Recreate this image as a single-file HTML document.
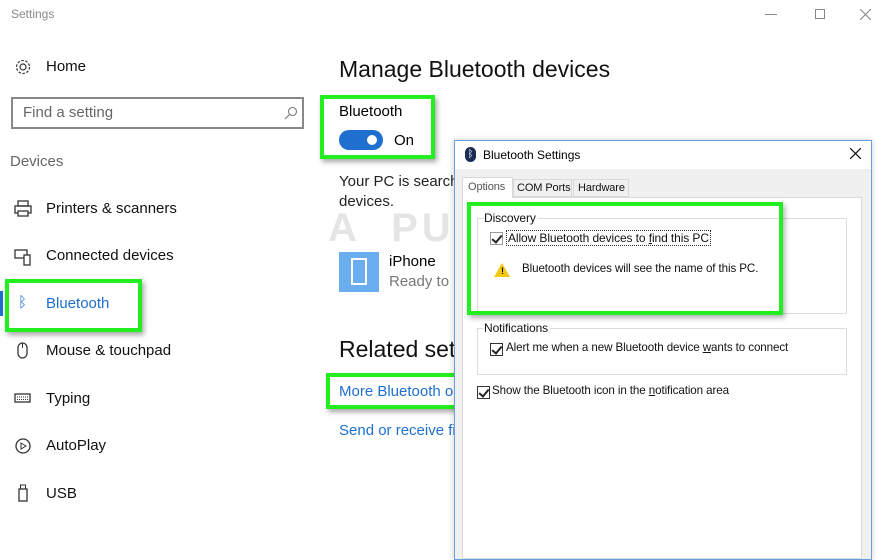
<!DOCTYPE html>
<html><head><meta charset="utf-8"><style>
*{margin:0;padding:0;box-sizing:border-box}
body{width:883px;height:559px;overflow:hidden;background:#fff;font-family:"Liberation Sans",sans-serif;color:#000;position:relative}
.a{position:absolute;white-space:nowrap}
.nav{font-size:15px;color:#111}
.ic{position:absolute;left:14px;width:18px;height:18px}
.g{position:absolute;border:4px solid #22ee22;box-shadow:2px 3px 5px rgba(0,0,0,.35)}
.d{font-size:12px;color:#111;letter-spacing:-0.1px}
.cb{position:absolute;width:13px;height:13px;border:1px solid #333;background:#fff}
.cb:after{content:"";position:absolute;left:3px;top:0px;width:4px;height:8px;border:solid #222;border-width:0 2px 2px 0;transform:rotate(40deg)}
</style></head><body>
<div class="a" style="left:11px;top:7px;font-size:12px;color:#888">Settings</div>
<div class="a" style="left:765px;top:14px;width:12px;height:1px;background:#888"></div>
<div class="a" style="left:815px;top:9px;width:10px;height:10px;border:1px solid #888"></div>
<svg class="a" style="left:860px;top:9px" width="11" height="11" viewBox="0 0 11 11"><path d="M0 0L11 11M11 0L0 11" stroke="#888" stroke-width="1.1"/></svg>

<svg class="ic" style="top:58px" viewBox="0 0 18 18"><circle cx="9" cy="9" r="3" fill="none" stroke="#333" stroke-width="1.2"/><circle cx="9" cy="9" r="6.5" fill="none" stroke="#333" stroke-width="1.2" stroke-dasharray="2.5 1.6"/></svg>
<div class="a nav" style="left:46px;top:58px">Home</div>
<div class="a" style="left:11px;top:97px;width:293px;height:32px;border:2px solid #888"></div>
<div class="a" style="left:23px;top:104px;font-size:15px;color:#666">Find a setting</div>
<svg class="a" style="left:284px;top:106px" width="14" height="14" viewBox="0 0 14 14"><circle cx="8.5" cy="5.5" r="4" fill="none" stroke="#777" stroke-width="1.1"/><path d="M5.5 8.5L1 13" stroke="#777" stroke-width="1.2"/></svg>
<div class="a" style="left:10px;top:153px;font-size:15px;color:#666">Devices</div>

<svg class="ic" style="top:200px" viewBox="0 0 18 18"><rect x="4" y="1" width="10" height="5" fill="none" stroke="#333" stroke-width="1.3"/><rect x="1" y="6" width="16" height="7" fill="none" stroke="#333" stroke-width="1.3"/><rect x="4" y="11" width="10" height="5" fill="#fff" stroke="#333" stroke-width="1.3"/></svg>
<div class="a nav" style="left:46px;top:200px">Printers &amp; scanners</div>
<svg class="ic" style="top:248px" viewBox="0 0 18 18"><rect x="1" y="2" width="12" height="8" fill="none" stroke="#333" stroke-width="1.3"/><rect x="10" y="7" width="6" height="10" fill="#fff" stroke="#333" stroke-width="1.3"/></svg>
<div class="a nav" style="left:46px;top:247px">Connected devices</div>
<div class="a" style="left:0;top:291px;width:3px;height:25px;background:#1e6fd0"></div>
<div class="a" style="left:18px;top:294px;font-size:15px;color:#1e6fd0">ᛒ</div>
<div class="a nav" style="left:46px;top:295px;color:#1e6fd0">Bluetooth</div>
<div class="g" style="left:5px;top:279px;width:137px;height:53px"></div>
<svg class="ic" style="top:342px" viewBox="0 0 18 18"><rect x="4" y="1" width="9" height="15" rx="4.5" fill="none" stroke="#333" stroke-width="1.3"/><line x1="8.5" y1="1" x2="8.5" y2="6" stroke="#333"/></svg>
<div class="a nav" style="left:46px;top:342px">Mouse &amp; touchpad</div>
<svg class="ic" style="top:390px" viewBox="0 0 18 18"><rect x="1" y="4" width="15" height="8" fill="none" stroke="#333" stroke-width="1.3"/><line x1="3" y1="7" x2="14" y2="7" stroke="#333" stroke-dasharray="1 1"/><line x1="3" y1="9.5" x2="14" y2="9.5" stroke="#333" stroke-dasharray="1 1"/></svg>
<div class="a nav" style="left:46px;top:390px">Typing</div>
<svg class="ic" style="top:437px" viewBox="0 0 18 18"><circle cx="9" cy="9" r="7" fill="none" stroke="#333" stroke-width="1.3"/><path d="M7 6 L12 9 L7 12Z" fill="none" stroke="#333"/></svg>
<div class="a nav" style="left:46px;top:437px">AutoPlay</div>
<svg class="ic" style="top:484px" viewBox="0 0 18 18"><rect x="5" y="5" width="8" height="12" fill="none" stroke="#333" stroke-width="1.3"/><rect x="6.5" y="1" width="5" height="4" fill="none" stroke="#333"/></svg>
<div class="a nav" style="left:46px;top:485px">USB</div>

<div class="a" style="left:339px;top:56px;font-size:23px;color:#111">Manage Bluetooth devices</div>
<div class="a" style="left:339px;top:103px;font-size:15px">Bluetooth</div>
<div class="a" style="left:339px;top:130px;width:44px;height:20px;border-radius:10px;background:#1e6fd0"></div>
<div class="a" style="left:367px;top:135px;width:10px;height:10px;border-radius:5px;background:#fff"></div>
<div class="a" style="left:394px;top:132px;font-size:15px">On</div>
<div class="g" style="left:320px;top:95px;width:115px;height:64px"></div>
<div class="a" style="left:339px;top:172px;font-size:15px;color:#222;line-height:20px">Your PC is searchi<br>devices.</div>
<div class="a" style="left:328px;top:206px;font-size:40px;font-weight:bold;color:rgba(150,150,150,.25);letter-spacing:4px">A&nbsp;&nbsp;PUALS</div>
<div class="a" style="left:339px;top:252px;width:40px;height:40px;background:#6aaef0"></div>
<div class="a" style="left:351px;top:258px;width:16px;height:27px;border:2px solid #fff"></div>
<div class="a" style="left:389px;top:253px;font-size:15px">iPhone</div>
<div class="a" style="left:389px;top:273px;font-size:15px;color:#777">Ready to p</div>
<div class="a" style="left:339px;top:336px;font-size:23px;color:#111">Related sett</div>
<div class="a" style="left:339px;top:383px;font-size:15px;color:#1e6fd0">More Bluetooth o</div>
<div class="g" style="left:326px;top:373px;width:134px;height:36px"></div>
<div class="a" style="left:339px;top:422px;font-size:15px;color:#1e6fd0">Send or receive fi</div>

<!-- dialog -->
<div class="a" style="left:454px;top:140px;width:418px;height:420px;background:#f0f0f0;border:1px solid #6aa0e0;box-shadow:0 0 6px rgba(0,0,0,.2)"></div>
<div class="a" style="left:455px;top:141px;width:416px;height:28px;background:#fff"></div>
<div class="a" style="left:465px;top:147px;width:11px;height:15px;border-radius:6px;background:#1a2d55;color:#fff;font-size:10px;text-align:center;line-height:15px">ᛒ</div>
<div class="a" style="left:483px;top:148px;font-size:12px">Bluetooth Settings</div>
<svg class="a" style="left:850px;top:148px" width="11" height="11" viewBox="0 0 11 11"><path d="M0 0L11 11M11 0L0 11" stroke="#111" stroke-width="1.2"/></svg>
<div class="a" style="left:462px;top:197px;width:400px;height:362px;background:#fff;border:1px solid #d9d9d9"></div>
<div class="a" style="left:462px;top:177px;width:51px;height:21px;background:#fff;border:1px solid #d9d9d9;border-bottom:none"></div>
<div class="a d" style="left:468px;top:181px;font-size:11px;color:#555">Options</div>
<div class="a" style="left:513px;top:179px;width:59px;height:18px;border:1px solid #d9d9d9;background:#f0f0f0"></div>
<div class="a d" style="left:517px;top:182px;font-size:11px">COM Ports</div>
<div class="a" style="left:573px;top:179px;width:56px;height:18px;border:1px solid #d9d9d9;background:#f0f0f0"></div>
<div class="a d" style="left:578px;top:182px;font-size:11px">Hardware</div>
<div class="a" style="left:477px;top:218px;width:370px;height:96px;border:1px solid #dcdcdc"></div>
<div class="a d" style="left:484px;top:211px;background:#fff;padding-right:2px">Discovery</div>
<div class="cb" style="left:490px;top:232px;border-color:#999"></div>
<div class="a d" style="left:506px;top:230px;border:1px dotted #333;padding:0 1px">Allow Bluetooth devices to <u>f</u>ind this PC</div>
<div class="a" style="left:494px;top:263px;width:0;height:0;border-left:8px solid transparent;border-right:8px solid transparent;border-bottom:14px solid #f2c811"></div>
<div class="a" style="left:501px;top:266px;font-size:9px;font-weight:bold">!</div>
<div class="a d" style="left:522px;top:262px;font-size:11.6px">Bluetooth devices will see the name of this PC.</div>
<div class="g" style="left:467px;top:202px;width:316px;height:113px;box-shadow:2px 3px 5px rgba(0,0,0,.3)"></div>
<div class="a" style="left:477px;top:328px;width:370px;height:47px;border:1px solid #dcdcdc"></div>
<div class="a d" style="left:484px;top:321px;background:#fff;padding-right:2px">Notifications</div>
<div class="cb" style="left:490px;top:343px"></div>
<div class="a d" style="left:506px;top:341px;font-size:11.6px">Alert me when a new Bluetooth device <u>w</u>ants to connect</div>
<div class="cb" style="left:477px;top:386px"></div>
<div class="a d" style="left:492px;top:384px;font-size:11.6px">Show the Bluetooth icon in the <u>n</u>otification area</div>
</body></html>
